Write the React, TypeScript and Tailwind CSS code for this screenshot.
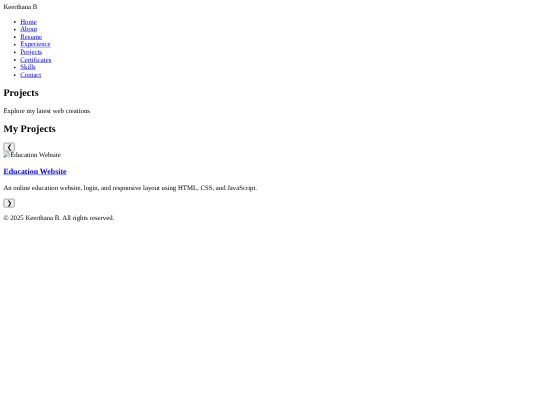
import React from "react";

const links = ["Home", "About", "Resume", "Experience", "Projects", "Certificates", "Skills", "Contact"];

const BrokenImage = () => (
  <svg width="16" height="16" viewBox="0 0 16 16" className="inline-block align-[-2px]">
    <path d="M1 1H10.5L15 5.5V8L11 11L8 8.5L1 15Z" fill="#fff" stroke="#8a8a8a" strokeWidth="1.5" />
    <path d="M10.5 1V5.5H15" fill="#ddd" stroke="#8a8a8a" strokeWidth="1.5" />
    <path d="M3 3.5H9V7H3Z" fill="#b5d0f2" />
    <path d="M2 12L6 8L8 9.5L2 15Z" fill="#3f9a38" />
    <path d="M4 15.5L9 10.5L11 12.5L14.5 9.5V15.5Z" fill="#fff" stroke="#b0b0b0" />
  </svg>
);

const ArrowButton = ({ label }: { label: string }) => (
  <button className="cursor-default rounded-[3px] border-2 border-[#9a9a9a] bg-[#efefef] px-[6px] py-[1px] font-['Liberation_Sans',sans-serif] text-[13.33px] leading-[15px] text-black">
    {label}
  </button>
);

export default function App() {
  return (
    <div className="h-[405px] w-[540px] overflow-hidden bg-white blur-[0.3px]">
      <div className="w-[1280px] origin-top-left scale-[0.421875] p-[8px] font-['Liberation_Serif',serif] text-[16px] leading-[18px] text-black [text-rendering:geometricPrecision]">
        <div>Keerthana B</div>

        <ul className="mt-[17px] mb-[16px] list-disc pl-[40px]">
          {links.map((link) => (
            <li key={link}>
              <a href="#" className="text-[#0000ee] underline">
                {link}
              </a>
            </li>
          ))}
        </ul>

        <h2 className="my-[20px] text-[24px] leading-[27px] font-bold">Projects</h2>
        <p className="my-[16px]">Explore my latest web creations</p>

        <h2 className="mt-[20px] mb-[19px] text-[24px] leading-[27px] font-bold">My Projects</h2>

        <div>
          <ArrowButton label="❮" />
          <div>
            <BrokenImage />
            <span>Education Website</span>
            <h3 className="my-[19px] text-[18.72px] leading-[21px] font-bold">
              <a href="#" className="text-[#0000ee] underline">
                Education Website
              </a>
            </h3>
            <p className="my-[16px]">
              An online education website, login, and responsive layout using HTML, CSS, and JavaScript.
            </p>
          </div>
          <ArrowButton label="❯" />
        </div>

        <p className="my-[16px]">© 2025 Keerthana B. All rights reserved.</p>
      </div>
    </div>
  );
}
